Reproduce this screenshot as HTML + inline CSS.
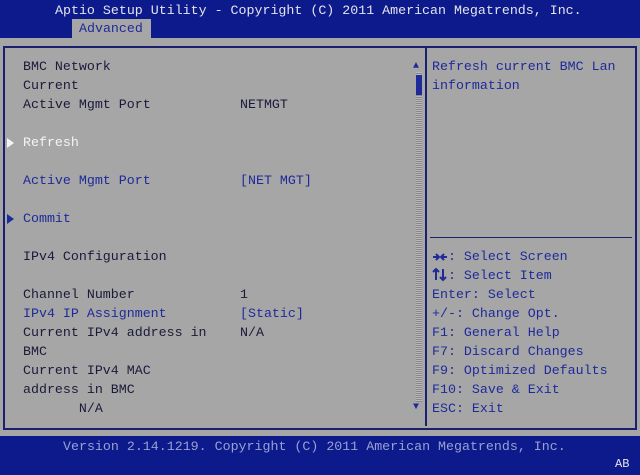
<!DOCTYPE html><html><head><style>
*{margin:0;padding:0}
body{width:640px;height:475px;position:relative;overflow:hidden;background:#a6a6a6;font-family:"Liberation Mono","DejaVu Sans Mono",monospace;font-size:13.3px;color:#1a1a3a}
.t{position:absolute;white-space:pre;line-height:19px}
.b{color:#1e2a9a}.w{color:#f4f4f4}
.bar{position:absolute;left:0;width:640px;background:#0d1a8c}
.tri{position:absolute;width:0;height:0;border-top:5px solid transparent;border-bottom:5px solid transparent;border-left:7px solid}
</style></head><body>
<div class="bar" style="top:0;height:38px"></div>
<div class="t" style="left:55px;top:1px;color:#e4e4ec">Aptio Setup Utility - Copyright (C) 2011 American Megatrends, Inc.</div>
<div style="position:absolute;left:72px;top:19px;width:79px;height:19px;background:#a6a6a6"></div>
<div class="t" style="left:79px;top:19px;color:#1e2a9a">Advanced</div>
<div style="position:absolute;left:3px;top:46px;width:630px;height:380px;border:2px solid #1a1f6e"></div>
<div style="position:absolute;left:425px;top:48px;width:2px;height:378px;background:#1a1f6e"></div>
<div style="position:absolute;left:430px;top:237px;width:202px;height:1px;background:#1a1f6e"></div>
<div style="position:absolute;left:416px;top:72px;width:6px;height:330px;background:repeating-linear-gradient(0deg,#888 0 1px,#b8b8b8 1px 2px)"></div>
<div style="position:absolute;left:416px;top:75px;width:6px;height:20px;background:#1e2a9a"></div>
<div class="t b" style="left:413px;top:57px;font-size:10px">▲</div>
<div class="t b" style="left:413px;top:398px;font-size:10px">▼</div>
<div class="t" style="left:23px;top:57px">BMC Network
Current
Active Mgmt Port</div>
<div class="t" style="left:240px;top:95px">NETMGT</div>
<div class="tri" style="left:7px;top:138px;color:#f4f4f4"></div>
<div class="t w" style="left:23px;top:133px">Refresh</div>
<div class="t b" style="left:23px;top:171px">Active Mgmt Port</div>
<div class="t b" style="left:240px;top:171px">[NET MGT]</div>
<div class="tri" style="left:7px;top:214px;color:#1e2a9a"></div>
<div class="t b" style="left:23px;top:209px">Commit</div>
<div class="t" style="left:23px;top:247px">IPv4 Configuration</div>
<div class="t" style="left:23px;top:285px">Channel Number</div>
<div class="t" style="left:240px;top:285px">1</div>
<div class="t b" style="left:23px;top:304px">IPv4 IP Assignment</div>
<div class="t b" style="left:240px;top:304px">[Static]</div>
<div class="t" style="left:23px;top:323px">Current IPv4 address in
BMC
Current IPv4 MAC
address in BMC
       N/A</div>
<div class="t" style="left:240px;top:323px">N/A</div>
<div class="t b" style="left:432px;top:57px">Refresh current BMC Lan
information</div>
<div class="t b" style="left:432px;top:247px">  : Select Screen
  : Select Item
Enter: Select
+/-: Change Opt.
F1: General Help
F7: Discard Changes
F9: Optimized Defaults
F10: Save &amp; Exit
ESC: Exit</div>
<svg style="position:absolute;left:432px;top:250px" width="16" height="32" viewBox="0 0 16 32" fill="none" stroke="#1e2a9a" stroke-width="2">
<path d="M1 7h6M4 4l3 3-3 3M15 7H9M12 4l-3 3 3 3"/>
<path d="M4 33V22M1 25l3-3 3 3M11 22v11M8 30l3 3 3-3" transform="translate(0,-3)"/>
</svg>
<div class="bar" style="top:436px;height:39px"></div>
<div class="t" style="left:63px;top:437px;color:#9aa0d0">Version 2.14.1219. Copyright (C) 2011 American Megatrends, Inc.</div>
<div class="t" style="left:615px;top:455px;color:#e4e4ec;font-size:12px">AB</div>
</body></html>
